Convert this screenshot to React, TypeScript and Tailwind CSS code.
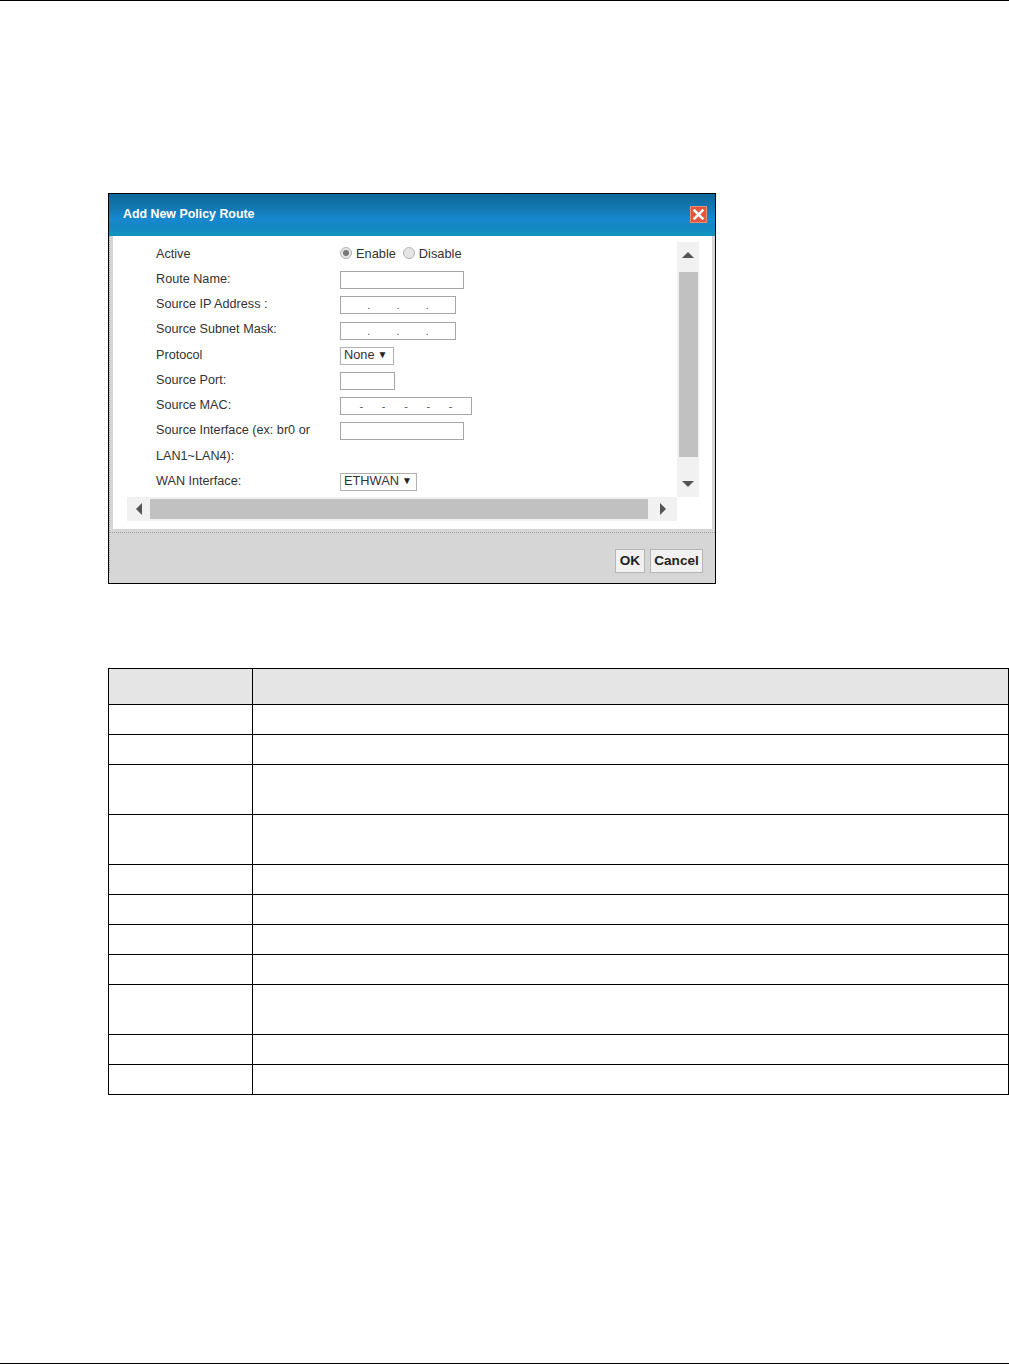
const rowHeights = [30, 30, 50, 50, 30, 30, 30, 30, 50, 30, 30];

function Box({ width, sep }: { width: string; sep?: string }) {
  const count = sep === "-" ? 5 : sep === "." ? 3 : 0;
  return (
    <div
      className={`flex h-[18px] items-center justify-evenly border border-[#a6a6a6] bg-white text-[11px] leading-none text-[#555] ${width}`}
    >
      {Array.from({ length: count }, (_, i) => (
        <span key={i}>{sep}</span>
      ))}
    </div>
  );
}

function SelectBox({ value, width }: { value: string; width: string }) {
  return (
    <div
      className={`flex h-[18px] items-center gap-[3px] border border-[#b0b0b0] bg-white pl-[3px] pb-[1px] text-[12.8px] text-[#333] ${width}`}
    >
      <span>{value}</span>
      <span className="text-[10px] leading-none text-[#222]">▼</span>
    </div>
  );
}

function Radio({ checked }: { checked?: boolean }) {
  return (
    <span className="mb-[3px] flex h-[12px] w-[12px] items-center justify-center rounded-full border border-[#b4b4b4] bg-[#e4e4e4]">
      {checked && <span className="h-[6px] w-[6px] rounded-full bg-[#777]" />}
    </span>
  );
}

function FormRow({ label, children }: { label: string; children?: React.ReactNode }) {
  return (
    <div className="flex h-[25.25px] items-center">
      <div className="w-[184px] shrink-0 whitespace-nowrap pb-[1.5px] text-[12.65px]">{label}</div>
      {children}
    </div>
  );
}

function Arrow({ points, className }: { points: string; className: string }) {
  return (
    <svg viewBox="0 0 12 12" className={className}>
      <polygon points={points} fill="#555" />
    </svg>
  );
}

function PolicyDialog() {
  return (
    <div className="h-[391px] w-[608px] border border-black bg-[#d6d6d6] font-['Liberation_Sans',Arial,sans-serif]">
      <div className="flex h-[42px] items-center justify-between bg-[linear-gradient(#0d6798_0%,#1379b4_35%,#1689d0_62%,#1586c4_72%,#1094bd_100%)] pl-[14px] pr-[8px]">
        <span className="pb-[2px] text-[12.4px] font-bold text-white">Add New Policy Route</span>
        <div className="mb-[1px] flex h-[17px] w-[17px] items-center justify-center border border-[#e88d78] bg-[#e4553d]">
          <svg viewBox="0 0 12 12" className="h-[13px] w-[13px]">
            <path d="M1.5 1.5 L10.5 10.5 M10.5 1.5 L1.5 10.5" stroke="#fff" strokeWidth="2.4" />
          </svg>
        </div>
      </div>

      <div className="border-l border-dotted border-[#a0a0a0]">
        <div className="ml-[3px] mr-[3px] h-[293px] bg-white pl-[14px] pt-[6px]">
          <div className="flex h-[279px] w-[572px] flex-col">
            <div className="flex h-[255px]">
              <div className="w-[550px] pl-[29px] text-[12.8px] leading-none text-[#333]">
                <FormRow label="Active">
                  <div className="flex items-center pb-[1px]">
                    <Radio checked />
                    <span className="ml-[4px]">Enable</span>
                    <span className="ml-[7px]">
                      <Radio />
                    </span>
                    <span className="ml-[4px]">Disable</span>
                  </div>
                </FormRow>
                <FormRow label="Route Name:">
                  <Box width="w-[124px]" />
                </FormRow>
                <FormRow label="Source IP Address :">
                  <Box width="w-[116px]" sep="." />
                </FormRow>
                <FormRow label="Source Subnet Mask:">
                  <div className="pt-[2px]">
                    <Box width="w-[116px]" sep="." />
                  </div>
                </FormRow>
                <FormRow label="Protocol">
                  <SelectBox value="None" width="w-[54px]" />
                </FormRow>
                <FormRow label="Source Port:">
                  <Box width="w-[55px]" />
                </FormRow>
                <FormRow label="Source MAC:">
                  <Box width="w-[132px]" sep="-" />
                </FormRow>
                <FormRow label="Source Interface (ex: br0 or">
                  <Box width="w-[124px]" />
                </FormRow>
                <FormRow label="LAN1~LAN4):" />
                <FormRow label="WAN Interface:">
                  <SelectBox value="ETHWAN" width="w-[77px]" />
                </FormRow>
              </div>
              <div className="flex w-[22px] flex-col items-center bg-[#f1f1f1]">
                <div className="flex h-[30px] items-center justify-center pb-[4px]">
                  <Arrow points="0,9 6,3 12,9" className="h-[12px] w-[12px]" />
                </div>
                <div className="ml-[1px] h-[185px] w-[19px] bg-[#c1c1c1]" />
                <div className="flex flex-1 items-end justify-center pb-[7px]">
                  <Arrow points="0,3 12,3 6,9" className="h-[12px] w-[12px]" />
                </div>
              </div>
            </div>
            <div className="flex h-[24px] w-[550px] items-center bg-[#f1f1f1]">
              <div className="flex w-[23px] justify-center">
                <Arrow points="9,0 3,6 9,12" className="h-[12px] w-[12px]" />
              </div>
              <div className="h-[20px] w-[498px] bg-[#c1c1c1]" />
              <div className="flex flex-1 justify-center">
                <Arrow points="3,0 9,6 3,12" className="h-[12px] w-[12px]" />
              </div>
            </div>
          </div>
        </div>

        <div className="pt-[3px]">
          <div className="border-t border-dotted border-[#9c9c9c]" />
          <div className="flex justify-end gap-[5px] pr-[12px] pt-[16px]">
            <div className="flex h-[24px] w-[30px] items-center justify-center border border-[#b5b5b5] bg-[#f1f1f1] text-[13.6px] font-bold text-[#222]">
              OK
            </div>
            <div className="flex h-[24px] w-[53px] items-center justify-center border border-[#b5b5b5] bg-[#f1f1f1] text-[13.6px] font-bold text-[#222]">
              Cancel
            </div>
          </div>
        </div>
      </div>
    </div>
  );
}

export default function App() {
  return (
    <div className="flex h-[1364px] flex-col overflow-hidden bg-white">
      <div className="h-px bg-black" />
      <div className="pl-[108px] pt-[192px]">
        <PolicyDialog />
      </div>
      <div className="pl-[108px] pt-[84px]">
        <table className="w-[901px] table-fixed border-collapse">
          <colgroup>
            <col className="w-[144px]" />
            <col />
          </colgroup>
          <tbody>
            <tr className="h-[36px] bg-[#e5e5e5]">
              <td className="border border-black" />
              <td className="border border-black" />
            </tr>
            {rowHeights.map((h, i) => (
              <tr key={i} className={h === 50 ? "h-[50px]" : "h-[30px]"}>
                <td className="border border-black" />
                <td className="border border-black" />
              </tr>
            ))}
          </tbody>
        </table>
      </div>
      <div className="mt-auto h-px bg-black" />
    </div>
  );
}
